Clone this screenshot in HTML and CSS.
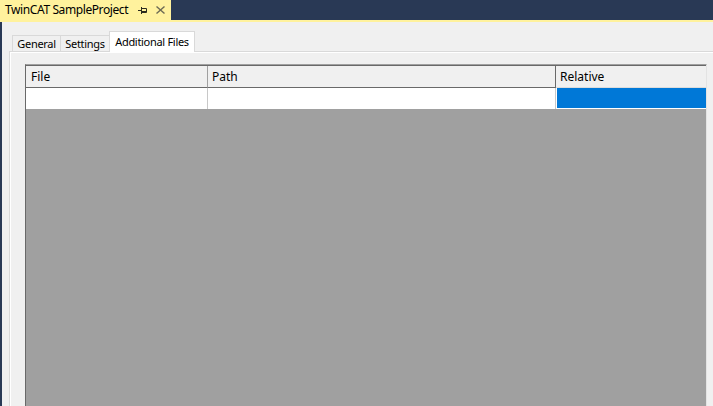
FILE: index.html
```html
<!DOCTYPE html>
<html>
<head>
<meta charset="utf-8">
<link rel="stylesheet" href="styles.css">
</head>
<body>
<div class="doc-strip">
  <div class="doc-tab">
    <span class="doc-title">TwinCAT SampleProject</span>
    <svg class="pin" width="9" height="7" viewBox="0 0 9 7"><path d="M0 3.5H3.5M3.5 0V7M3.5 1.5H8.5V5.5H3.5M3.5 4.5H8.5" stroke="#2b2b1f" fill="none" stroke-width="1"/></svg>
    <svg class="close" width="9" height="8" viewBox="0 0 9 8"><path d="M0.5 0.5L8.5 7.5M8.5 0.5L0.5 7.5" stroke="#6e6c55" fill="none" stroke-width="1.4"/></svg>
  </div>
</div>
<div class="doc-rule"></div>
<div class="doc-body">
  <div class="tabs">
    <div class="tab tab-general">General</div>
    <div class="tab tab-settings">Settings</div>
    <div class="tab tab-active">Additional Files</div>
  </div>
  <div class="panel">
    <div class="panel-inner">
      <div class="grid">
        <div class="grid-head">
          <div class="hcell col-file">File</div>
          <div class="hcell col-path">Path</div>
          <div class="hcell col-rel">Relative</div>
        </div>
        <div class="grid-row">
          <div class="cell col-file"></div>
          <div class="cell col-path"></div>
          <div class="cell col-rel"><div class="sel"></div></div>
        </div>
        <div class="grid-empty"></div>
      </div>
    </div>
  </div>
</div>
</body>
</html>
```
FILE: styles.css
```css
html, body {
  margin: 0;
  height: 100%;
  overflow: hidden;
  background: #293955;
}
body {
  font-family: "Noto Sans", "Liberation Sans", sans-serif;
  color: #000;
}
.doc-strip {
  height: 20px;
  display: flex;
}
.doc-tab {
  width: 171px;
  background: #fff29d;
  display: flex;
  align-items: center;
  padding-left: 5px;
  box-sizing: border-box;
}
.doc-title {
  font-size: 12px;
  letter-spacing: -0.4px;
  line-height: 20px;
  width: 133px;
  white-space: nowrap;
}
.pin {
  display: block;
  margin-top: 1px;
}
.close {
  display: block;
  margin-left: 9px;
}
.doc-rule {
  height: 2px;
  background: #fff29d;
}
.doc-body {
  margin-left: 2px;
  height: calc(100% - 22px);
  background: #f0f0f0;
  padding: 9px 0 0 7px;
  box-sizing: border-box;
  display: flex;
  flex-direction: column;
}
.tabs {
  display: flex;
  align-items: flex-end;
  height: 20px;
  padding-left: 3px;
  font-size: 11px;
  letter-spacing: -0.3px;
}
.tab {
  height: 16px;
  box-sizing: border-box;
  border: 1px solid #d9d9d9;
  border-bottom: none;
  display: flex;
  align-items: center;
  justify-content: center;
  background: #f0f0f0;
  white-space: nowrap;
}
.tab-general { width: 49px; }
.tab-settings { width: 50px; margin-left: -1px; }
.tab-active {
  width: 86px;
  height: 21px;
  margin-left: -1px;
  margin-bottom: -1px;
  background: #fff;
  position: relative;
  z-index: 1;
  padding-bottom: 1px;
}
.panel {
  flex: 1;
  border: 1px solid #d9d9d9;
  border-right: none;
  border-bottom: none;
  padding: 1px 0 0 1px;
  background: #fff;
  display: flex;
  min-height: 0;
}
.panel-inner {
  flex: 1;
  background: #f0f0f0;
  padding: 11px 7px 0 14px;
  display: flex;
  min-height: 0;
}
.grid {
  width: 682px;
  box-sizing: border-box;
  border-top: 1px solid #a0a0a0;
  border-left: 1px solid #696969;
  border-right: 1px solid #e3e3e3;
  display: flex;
  flex-direction: column;
  background: #a0a0a0;
}
.grid-head {
  display: flex;
  height: 22px;
  border-top: 1px solid #696969;
  background: #f0f0f0;
  font-size: 12px;
}
.hcell {
  box-sizing: border-box;
  border-bottom: 1px solid #696969;
  display: flex;
  align-items: center;
  padding-left: 4px;
  padding-bottom: 1px;
}
.hcell.col-file { border-right: 1px solid #a0a0a0; padding-left: 5px; }
.hcell.col-path { border-right: 1px solid #696969; }
.hcell.col-rel { border-bottom-color: #dcdcdc; }
.col-file { width: 182px; }
.col-path { width: 348px; }
.col-rel { width: 150px; }
.grid-row {
  display: flex;
  height: 21px;
  background: #fff;
}
.cell {
  box-sizing: border-box;
  height: 21px;
}
.cell.col-file, .cell.col-path { border-right: 1px solid #c8c8c8; }
.cell.col-rel { padding: 0 0 1px 1px; }
.sel {
  height: 20px;
  background: #0078d7;
}
.grid-empty {
  flex: 1;
  background: #a0a0a0;
}
```
